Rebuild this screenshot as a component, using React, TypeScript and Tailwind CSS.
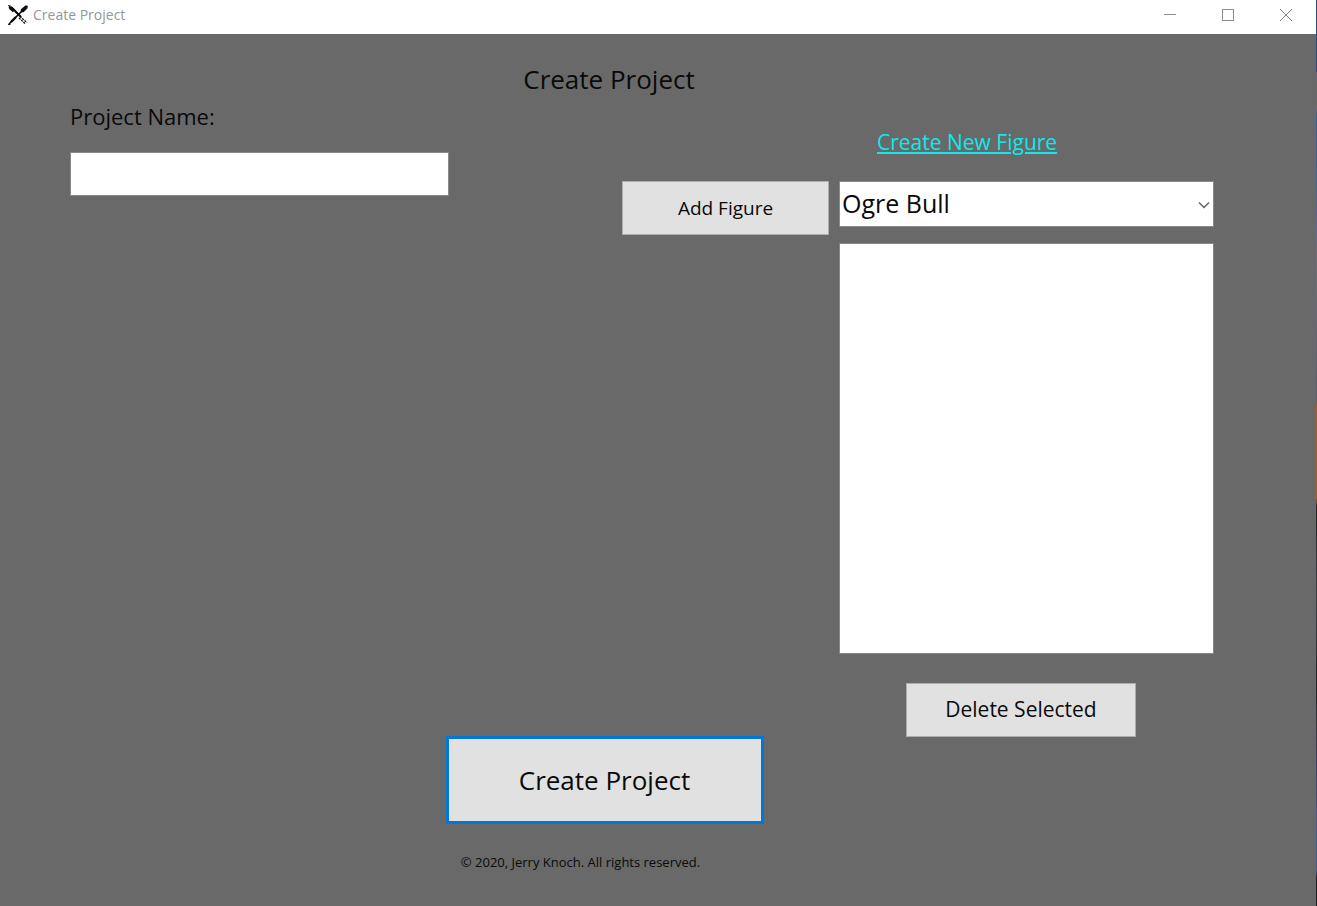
import { useState } from "react";

const buttonBase = "flex items-center justify-center border border-[#adadad] bg-[#e1e1e1] text-[#0a0a0a]";

function AppIcon() {
  return (
    <svg width="20" height="20" viewBox="0 0 20 20" fill="none" stroke="#0a0a12" aria-hidden="true">
      <path d="M1 2L4 3L13 12" strokeWidth="2.2" />
      <path d="M2 2.5L6 6" strokeWidth="3.4" />
      <path d="M12 11.5L19 17.5M11 13L17.5 19" strokeWidth="1.3" strokeDasharray="2 1" />
      <path d="M1 19L14 6" strokeWidth="1.6" />
      <path d="M3 17L8 12" strokeWidth="2.4" />
      <path d="M13 4.5L17.5 0.8L19.5 1L19 3.5L15.5 7L13 7Z" fill="#0a0a12" strokeWidth="0.6" />
      <path d="M0 0.8H2.5M0 19.4H2.5" strokeWidth="1" />
    </svg>
  );
}

function TitleBar() {
  const control = "flex h-[30px] w-[58px] items-center justify-center";
  return (
    <header className="flex h-[34px] items-start justify-between bg-white">
      <div className="flex h-[30px] items-center gap-[5px] pl-2 text-sm text-[#8f9898]">
        <AppIcon />
        <span>Create Project</span>
      </div>
      <div className="flex pr-px">
        <button type="button" aria-label="Minimize" className={control}>
          <svg width="12" height="12" viewBox="0 0 12 12" shapeRendering="crispEdges" stroke="#8c8c8c">
            <path d="M0 5.5H12" />
          </svg>
        </button>
        <button type="button" aria-label="Maximize" className={control}>
          <svg width="12" height="12" viewBox="0 0 12 12" shapeRendering="crispEdges" stroke="#8c8c8c" fill="none">
            <rect x="0.5" y="0.5" width="11" height="11" />
          </svg>
        </button>
        <button type="button" aria-label="Close" className={control}>
          <svg width="12" height="12" viewBox="0 0 12 12" stroke="#808080">
            <path d="M0 0L12 12M12 0L0 12" />
          </svg>
        </button>
      </div>
    </header>
  );
}

export default function App() {
  const [name, setName] = useState("");
  return (
    <div className="flex min-h-screen bg-[#696969] font-['Open_Sans','Noto_Sans',sans-serif] text-[#0a0a0a]">
      <div className="flex min-w-0 flex-1 flex-col">
        <TitleBar />
        <main className="flex flex-1 flex-col pt-[25px]">
          <h1 className="pr-[98px] text-center text-[26px] leading-10">Create Project</h1>
          <form className="flex flex-col" onSubmit={(e) => e.preventDefault()}>
            <div className="grid grid-cols-[1fr_207px_375px] gap-x-[10px] pl-[70px] pr-[102px]">
              <div className="pt-px">
                <label htmlFor="project-name" className="block text-[22px] leading-8">
                  Project Name:
                </label>
                <input
                  id="project-name"
                  type="text"
                  value={name}
                  onChange={(e) => setName(e.target.value)}
                  className="mt-5 block h-11 w-[70%] border border-[#8a8a8a] bg-white px-2 text-[22px] outline-none"
                />
              </div>
              <div className="pt-[82px]">
                <button type="button" className={buttonBase + " h-[54px] w-full text-[19px]"}>
                  Add Figure
                </button>
              </div>
              <div className="flex flex-col pt-[27px]">
                <a href="#new-figure" className="ml-[38px] self-start text-[21px] leading-8 text-[#10e8ec] underline">
                  Create New Figure
                </a>
                <div className="relative mt-[23px]">
                  <select
                    aria-label="Figure"
                    className="block h-[46px] w-full appearance-none border border-[#8a8a8a] bg-white pl-[2px] text-[25px] outline-none"
                  >
                    <option>Ogre Bull</option>
                  </select>
                  <svg
                    className="pointer-events-none absolute top-5 right-1"
                    width="12"
                    height="8"
                    viewBox="0 0 12 8"
                    fill="none"
                    stroke="#606060"
                    strokeWidth="1.4"
                  >
                    <path d="M1 1.5L6 6.5L11 1.5" />
                  </svg>
                </div>
                <ul aria-label="Selected figures" className="mt-4 h-[411px] border border-[#828790] bg-white" />
                <button type="button" className={buttonBase + " mt-[29px] ml-[67px] h-[54px] w-[230px] text-[21px]"}>
                  Delete Selected
                </button>
              </div>
            </div>
            <div className="flex justify-center pr-[107px]">
              <button
                type="submit"
                className="-mt-px h-[88px] w-[318px] border-[3px] border-[#0078d7] bg-[#e1e1e1] text-[26px] text-[#0a0a0a]"
              >
                Create Project
              </button>
            </div>
          </form>
          <footer className="pt-[28px] pr-[155px] text-center text-[13px] leading-5">
            © 2020, Jerry Knoch. All rights reserved.
          </footer>
        </main>
      </div>
      <div className="w-px bg-[linear-gradient(to_bottom,#35487a_0%,#35487a_8%,#6a6a6a_8%,#6a6a6a_12%,#3f5a94_13%,#4a6090_20%,#6a7080_28%,#55606c_44%,#a85a28_45%,#a85a28_55%,#24242a_56%,#3a3e48_66%,#24242a_76%,#4a5a84_90%,#3f5a94_96%,#1c1c22_97%)]" />
    </div>
  );
}
